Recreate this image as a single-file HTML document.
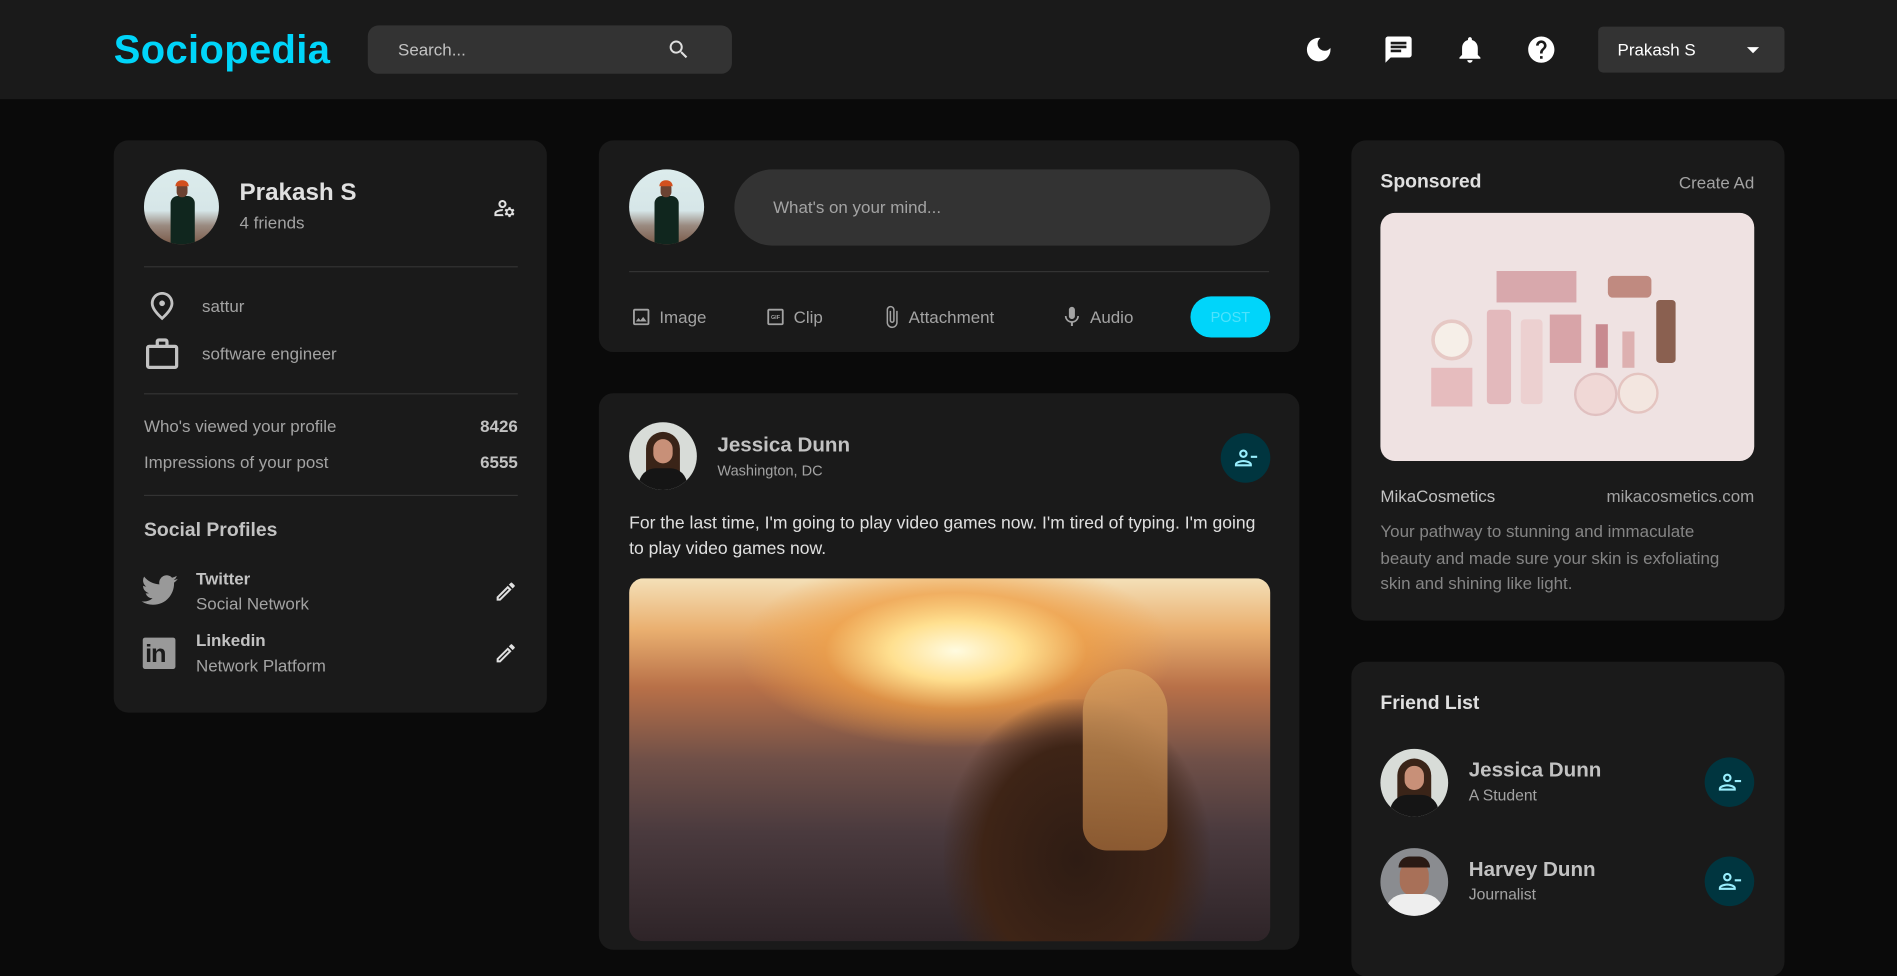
<!DOCTYPE html>
<html><head><meta charset="utf-8">
<style>
*{box-sizing:border-box;margin:0;padding:0}
html,body{width:1897px;height:928px;overflow:hidden;background:#0a0a0a;font-family:"Liberation Sans",sans-serif}
#w{position:absolute;left:0;top:0;width:1568px;height:767px;transform:scale(1.20982);transform-origin:0 0}
.a{position:absolute}
.card{position:absolute;background:#1a1a1a;border-radius:12px}
.t{position:absolute;white-space:nowrap;transform:translateY(-50%)}
.hr{position:absolute;height:1px;background:#333}
.av{position:absolute;border-radius:50%;overflow:hidden}
.btn{position:absolute;width:41px;height:41px;border-radius:50%;background:#00353f}
svg{position:absolute}
</style></head><body><div id="w">
<div class="a" style="left:0;top:0;width:1568px;height:82px;background:#1a1a1a"></div>
<div class="t" style="left:94px;top:41px;font-size:33px;font-weight:bold;color:#00d5fa;letter-spacing:0.3px">Sociopedia</div>
<div class="a" style="left:304px;top:21px;width:301px;height:40px;background:#333;border-radius:9px"></div>
<div class="t" style="left:329px;top:41px;font-size:14px;color:#c2c2c2">Search...</div>
<svg style="left:551px;top:31px" width="20" height="20" viewBox="0 0 24 24"><path fill="#e0e0e0" d="M15.5 14h-.79l-.28-.27A6.47 6.47 0 0 0 16 9.5 6.5 6.5 0 1 0 9.5 16c1.61 0 3.090-.59 4.23-1.57l.27.28v.79l5 4.99L20.49 19zm-6 0C7.01 14 5 11.99 5 9.5S7.01 5 9.5 5 14 7.01 14 9.5 11.99 14 9.5 14"/></svg>
<svg style="left:1077px;top:28px" width="26" height="26" viewBox="0 0 24 24"><path fill="#fff" d="M12 3a9 9 0 1 0 9 9c0-.46-.04-.92-.1-1.36a5.39 5.39 0 0 1-4.4 2.26 5.4 5.4 0 0 1-3.14-9.8c-.44-.06-.9-.1-1.36-.1"/></svg>
<svg style="left:1143px;top:28px" width="26" height="26" viewBox="0 0 24 24"><path fill="#fff" d="M20 2H4c-1.1 0-2 .9-2 2v18l4-4h14c1.1 0 2-.9 2-2V4c0-1.1-.9-2-2-2M6 9h12v2H6zm8 5H6v-2h8zm4-6H6V6h12z"/></svg>
<svg style="left:1202px;top:28px" width="26" height="26" viewBox="0 0 24 24"><path fill="#fff" d="M12 22c1.1 0 2-.9 2-2h-4c0 1.1.89 2 2 2m6-6v-5c0-3.070-1.64-5.640-4.5-6.32V4c0-.83-.67-1.5-1.5-1.5s-1.5.67-1.5 1.5v.68C7.63 5.36 6 7.92 6 11v5l-2 2v1h16v-1z"/></svg>
<svg style="left:1261px;top:28px" width="26" height="26" viewBox="0 0 24 24"><path fill="#fff" d="M12 2C6.48 2 2 6.48 2 12s4.48 10 10 10 10-4.48 10-10S17.52 2 12 2m1 17h-2v-2h2zm2.07-7.75-.9.92C13.45 12.9 13 13.5 13 15h-2v-.5c0-1.1.45-2.1 1.17-2.83l1.24-1.26c.37-.36.59-.86.59-1.41 0-1.1-.9-2-2-2s-2 .9-2 2H8c0-2.21 1.79-4 4-4s4 1.79 4 4c0 .88-.36 1.68-.93 2.25"/></svg>
<div class="a" style="left:1321px;top:22px;width:154px;height:38px;background:#333;border-radius:4px"></div>
<div class="t" style="left:1337px;top:41px;font-size:14px;color:#fff">Prakash S</div>
<div class="a" style="left:1444px;top:39px;border-left:5px solid transparent;border-right:5px solid transparent;border-top:5px solid #fff"></div>

<div class="card" style="left:94px;top:116px;width:358px;height:473px"></div>
<div class="av" style="left:119px;top:140px;width:62px;height:62px;background:linear-gradient(180deg,#dcecec 0%,#d6e6e8 55%,#9a8a80 75%,#7a5a48 100%)"><div class="a" style="left:22px;top:22px;width:20px;height:40px;background:#10261e;border-radius:6px 6px 0 0"></div><div class="a" style="left:27px;top:11px;width:9px;height:12px;background:#6b4232;border-radius:4px"></div><div class="a" style="left:26px;top:9px;width:11px;height:5px;background:#d2501f;border-radius:5px 5px 0 0"></div></div>
<div class="t" style="left:198px;top:160px;font-size:20px;font-weight:bold;color:#e0e0e0">Prakash S</div>
<div class="t" style="left:198px;top:184px;font-size:14px;color:#a3a3a3">4 friends</div>
<svg style="left:407px;top:162px" width="20" height="20" viewBox="0 0 24 24"><path fill="#e0e0e0" d="M4 18v-.65c0-.34.16-.66.41-.81C6.1 15.53 8.03 15 10 15c.03 0 .05 0 .08.01.1-.7.3-1.37.59-1.98-.22-.02-.44-.03-.67-.03-2.42 0-4.68.67-6.61 1.82-.88.52-1.39 1.5-1.39 2.53V20h9.26c-.42-.6-.75-1.28-.97-2zm6-6c2.21 0 4-1.79 4-4s-1.79-4-4-4-4 1.79-4 4 1.79 4 4 4m0-6c1.1 0 2 .9 2 2s-.9 2-2 2-2-.9-2-2 .9-2 2-2m10.75 10c0-.22-.03-.42-.06-.63l1.14-1.01-1-1.73-1.45.49c-.32-.27-.68-.48-1.08-.63L18 11h-2l-.3 1.49c-.4.15-.76.36-1.08.63l-1.45-.49-1 1.73 1.14 1.01c-.03.21-.06.41-.06.63s.03.42.06.63l-1.14 1.01 1 1.730 1.45-.49c.32.27.68.48 1.08.63L16 21h2l.3-1.49c.4-.15.76-.36 1.08-.63l1.45.49 1-1.73-1.14-1.01c.03-.21.06-.41.06-.63M17 18c-1.1 0-2-.9-2-2s.9-2 2-2 2 .9 2 2-.9 2-2 2"/></svg>
<div class="hr" style="left:119px;top:220px;width:309px"></div>
<svg style="left:120px;top:239px" width="28" height="28" viewBox="0 0 24 24"><path fill="#c2c2c2" d="M12 12c-1.1 0-2-.9-2-2s.9-2 2-2 2 .9 2 2-.9 2-2 2m6-1.8C18 6.57 15.35 4 12 4s-6 2.57-6 6.2c0 2.34 1.95 5.44 6 9.14 4.05-3.7 6-6.8 6-9.14M12 2c4.2 0 8 3.22 8 8.2 0 3.32-2.67 7.25-8 11.8-5.33-4.55-8-8.48-8-11.8C4 5.22 7.8 2 12 2"/></svg>
<div class="t" style="left:167px;top:253px;font-size:14px;color:#a3a3a3">sattur</div>
<svg style="left:118px;top:277px" width="32" height="32" viewBox="0 0 24 24"><path fill="#c2c2c2" d="M14 6V4h-4v2zM4 8v11h16V8zm16-2c1.11 0 2 .89 2 2v11c0 1.11-.89 2-2 2H4c-1.11 0-2-.89-2-2l.01-11c0-1.11.88-2 1.990-2h4V4c0-1.11.89-2 2-2h4c1.11 0 2 .89 2 2v2z"/></svg>
<div class="t" style="left:167px;top:292px;font-size:14px;color:#a3a3a3">software engineer</div>
<div class="hr" style="left:119px;top:325px;width:309px"></div>
<div class="t" style="left:119px;top:352px;font-size:14px;color:#a3a3a3">Who's viewed your profile</div>
<div class="t" style="right:1140px;top:352px;font-size:14px;font-weight:bold;color:#c2c2c2">8426</div>
<div class="t" style="left:119px;top:382px;font-size:14px;color:#a3a3a3">Impressions of your post</div>
<div class="t" style="right:1140px;top:382px;font-size:14px;font-weight:bold;color:#c2c2c2">6555</div>
<div class="hr" style="left:119px;top:409px;width:309px"></div>
<div class="t" style="left:119px;top:439px;font-size:16px;font-weight:bold;color:#c2c2c2">Social Profiles</div>
<svg style="left:117px;top:475px" width="30" height="26" viewBox="0 0 24 20"><path fill="#999" d="M24 2.4a9.8 9.8 0 0 1-2.8.8A4.9 4.9 0 0 0 23.3.4a9.9 9.9 0 0 1-3.1 1.2A4.9 4.9 0 0 0 11.8 6 14 14 0 0 1 1.7.9a4.9 4.9 0 0 0 1.5 6.6 4.9 4.9 0 0 1-2.2-.6v.1a4.9 4.9 0 0 0 3.9 4.8 4.9 4.9 0 0 1-2.2.1 4.9 4.9 0 0 0 4.6 3.4A9.9 9.9 0 0 1 0 17.3 14 14 0 0 0 7.5 19.5c9.1 0 14-7.5 14-14v-.6A10 10 0 0 0 24 2.4"/></svg>
<div class="t" style="left:162px;top:478px;font-size:14px;font-weight:bold;color:#c2c2c2">Twitter</div>
<div class="t" style="left:162px;top:499px;font-size:14px;color:#a3a3a3">Social Network</div>
<svg style="left:408px;top:479px" width="20" height="20" viewBox="0 0 24 24"><path fill="#e0e0e0" d="M3 17.25V21h3.75L17.81 9.94l-3.75-3.75zM5.92 19H5v-.92l9.06-9.06.92.92zM20.71 5.63l-2.34-2.34a1 1 0 0 0-1.41 0l-1.83 1.83 3.75 3.75 1.83-1.83a1 1 0 0 0 0-1.41"/></svg>
<div class="a" style="left:118px;top:527px;width:27px;height:26px;background:#999;border-radius:2px"></div>
<div class="a" style="left:120px;top:528px;font-size:21px;font-weight:bold;color:#1a1a1a;line-height:26px;letter-spacing:-1px">in</div>
<div class="t" style="left:162px;top:529px;font-size:14px;font-weight:bold;color:#c2c2c2">Linkedin</div>
<div class="t" style="left:162px;top:550px;font-size:14px;color:#a3a3a3">Network Platform</div>
<svg style="left:408px;top:530px" width="20" height="20" viewBox="0 0 24 24"><path fill="#e0e0e0" d="M3 17.25V21h3.75L17.81 9.94l-3.75-3.75zM5.92 19H5v-.92l9.06-9.06.92.92zM20.71 5.63l-2.34-2.34a1 1 0 0 0-1.41 0l-1.83 1.83 3.75 3.75 1.83-1.83a1 1 0 0 0 0-1.41"/></svg>

<div class="card" style="left:495px;top:116px;width:579px;height:175px"></div>
<div class="av" style="left:520px;top:140px;width:62px;height:62px;background:linear-gradient(180deg,#dcecec 0%,#d6e6e8 55%,#9a8a80 75%,#7a5a48 100%)"><div class="a" style="left:21px;top:22px;width:20px;height:40px;background:#10261e;border-radius:6px 6px 0 0"></div><div class="a" style="left:26px;top:11px;width:9px;height:12px;background:#6b4232;border-radius:4px"></div><div class="a" style="left:25px;top:9px;width:11px;height:5px;background:#d2501f;border-radius:5px 5px 0 0"></div></div>
<div class="a" style="left:607px;top:140px;width:443px;height:63px;background:#333;border-radius:32px"></div>
<div class="t" style="left:639px;top:171px;font-size:14px;color:#a3a3a3">What's on your mind...</div>
<div class="hr" style="left:520px;top:224px;width:529px"></div>
<svg style="left:521px;top:253px" width="18" height="18" viewBox="0 0 24 24"><path fill="#a3a3a3" d="M19 5v14H5V5zm0-2H5c-1.1 0-2 .9-2 2v14c0 1.1.9 2 2 2h14c1.1 0 2-.9 2-2V5c0-1.1-.9-2-2-2m-4.86 8.86-3 3.87L9 13.14 6 17h12z"/></svg>
<div class="t" style="left:545px;top:262px;font-size:14px;color:#a3a3a3">Image</div>
<svg style="left:632px;top:253px" width="18" height="18" viewBox="0 0 24 24"><path fill="#a3a3a3" d="M19 3H5c-1.1 0-2 .9-2 2v14c0 1.1.9 2 2 2h14c1.1 0 2-.9 2-2V5c0-1.1-.9-2-2-2m0 16H5V5h14z"/><text x="12" y="14.5" font-size="6" fill="#a3a3a3" text-anchor="middle" font-family="Liberation Sans" font-weight="bold">GIF</text></svg>
<div class="t" style="left:656px;top:262px;font-size:14px;color:#a3a3a3">Clip</div>
<svg style="left:727px;top:251px" width="20" height="22" viewBox="0 0 24 24"><path fill="#a3a3a3" d="M16.5 6v11.5c0 2.21-1.79 4-4 4s-4-1.79-4-4V5a2.5 2.5 0 0 1 5 0v10.5c0 .55-.45 1-1 1s-1-.45-1-1V6H10v9.5a2.5 2.5 0 0 0 5 0V5c0-2.21-1.79-4-4-4S7 2.79 7 5v12.5c0 3.04 2.46 5.5 5.5 5.5s5.5-2.46 5.5-5.5V6z"/></svg>
<div class="t" style="left:751px;top:262px;font-size:14px;color:#a3a3a3">Attachment</div>
<svg style="left:876px;top:252px" width="20" height="20" viewBox="0 0 24 24"><path fill="#a3a3a3" d="M12 14c1.66 0 2.99-1.34 2.99-3L15 5c0-1.66-1.34-3-3-3S9 3.34 9 5v6c0 1.66 1.34 3 3 3m5.3-3c0 3-2.54 5.1-5.3 5.1S6.7 14 6.7 11H5c0 3.41 2.72 6.23 6 6.72V21h2v-3.28c3.28-.48 6-3.3 6-6.72z"/></svg>
<div class="t" style="left:901px;top:262px;font-size:14px;color:#a3a3a3">Audio</div>
<div class="a" style="left:984px;top:245px;width:66px;height:34px;background:#00d5fa;border-radius:17px;color:#4de2fc;font-size:12px;text-align:center;line-height:34px">POST</div>

<div class="card" style="left:495px;top:325px;width:579px;height:460px"></div>
<div class="av" style="left:520px;top:349px;width:56px;height:56px;background:#d8dcd8"><div class="a" style="left:14px;top:8px;width:28px;height:44px;background:#3a2418;border-radius:14px 14px 6px 6px"></div><div class="a" style="left:20px;top:14px;width:16px;height:20px;background:#c89078;border-radius:8px"></div><div class="a" style="left:8px;top:38px;width:40px;height:20px;background:#151515;border-radius:14px 14px 0 0"></div></div>
<div class="t" style="left:593px;top:368px;font-size:17px;font-weight:bold;color:#c2c2c2">Jessica Dunn</div>
<div class="t" style="left:593px;top:389px;font-size:12px;color:#a3a3a3">Washington, DC</div>
<div class="btn" style="left:1009px;top:358px"></div>
<svg style="left:1019px;top:368px" width="21" height="21" viewBox="0 0 24 24"><path fill="#99eefd" d="M14 8c0-2.21-1.79-4-4-4S6 5.79 6 8s1.79 4 4 4 4-1.79 4-4m-2 0c0 1.1-.9 2-2 2s-2-.9-2-2 .9-2 2-2 2 .9 2 2M2 18v2h16v-2c0-2.66-5.33-4-8-4s-8 1.34-8 4m2 0c.2-.71 3.3-2 6-2 2.69 0 5.77 1.28 6 2zm13-8h6v2h-6z"/></svg>
<div class="a" style="left:520px;top:423px;width:530px;font-size:14.5px;line-height:21px;color:#e0e0e0">For the last time, I'm going to play video games now. I'm tired of typing. I'm going to play video games now.</div>
<div class="a" style="left:520px;top:478px;width:530px;height:300px;border-radius:12px;overflow:hidden;background:radial-gradient(ellipse 180px 80px at 270px 60px,#fffbe0 0%,#ffe090 30%,rgba(240,160,70,0.7) 60%,rgba(0,0,0,0) 100%),linear-gradient(180deg,#f4e0b8 0%,#eab070 14%,#b87048 30%,#705048 50%,#4a3a3e 70%,#2e2428 100%)">
<div class="a" style="left:260px;top:100px;width:220px;height:220px;background:radial-gradient(ellipse at 50% 60%,#2e1c14 0%,#3e2416 50%,rgba(0,0,0,0) 72%)"></div>
<div class="a" style="left:375px;top:75px;width:70px;height:150px;background:linear-gradient(180deg,#d8a060,#a06838);border-radius:35px 35px 20px 20px;opacity:.8"></div>
</div>

<div class="card" style="left:1117px;top:116px;width:358px;height:397px"></div>
<div class="t" style="left:1141px;top:151px;font-size:16px;font-weight:bold;color:#e0e0e0">Sponsored</div>
<div class="t" style="right:118px;top:151px;font-size:14px;color:#a3a3a3">Create Ad</div>
<div class="a" style="left:1141px;top:176px;width:309px;height:205px;border-radius:12px;overflow:hidden;background:#efe2e2">
<div class="a" style="left:96px;top:48px;width:66px;height:26px;background:#d8a8ac"></div>
<div class="a" style="left:188px;top:52px;width:36px;height:18px;background:#c08a80;border-radius:4px"></div>
<div class="a" style="left:42px;top:88px;width:34px;height:34px;background:#f6efe8;border-radius:50%;border:3px solid #e6c8c4"></div>
<div class="a" style="left:88px;top:80px;width:20px;height:78px;background:#e3b9bc;border-radius:3px"></div>
<div class="a" style="left:116px;top:88px;width:18px;height:70px;background:#ecd0d0;border-radius:3px"></div>
<div class="a" style="left:140px;top:84px;width:26px;height:40px;background:#d8a4a8"></div>
<div class="a" style="left:42px;top:128px;width:34px;height:32px;background:#e6bcbe"></div>
<div class="a" style="left:178px;top:92px;width:10px;height:36px;background:#c88a90"></div>
<div class="a" style="left:200px;top:98px;width:10px;height:30px;background:#ddb0b0"></div>
<div class="a" style="left:228px;top:72px;width:16px;height:52px;background:#8a6050;border-radius:3px"></div>
<div class="a" style="left:160px;top:132px;width:36px;height:36px;background:#f0d8d6;border-radius:50%;border:2px solid #e0c0c0"></div>
<div class="a" style="left:196px;top:132px;width:34px;height:34px;background:#f3e6e0;border-radius:50%;border:2px solid #e4c4c0"></div>
</div>
<div class="t" style="left:1141px;top:410px;font-size:14px;color:#c2c2c2">MikaCosmetics</div>
<div class="t" style="right:118px;top:410px;font-size:14px;color:#a3a3a3">mikacosmetics.com</div>
<div class="a" style="left:1141px;top:429px;width:300px;font-size:14px;line-height:21.5px;color:#858585">Your pathway to stunning and immaculate beauty and made sure your skin is exfoliating skin and shining like light.</div>

<div class="card" style="left:1117px;top:547px;width:358px;height:260px"></div>
<div class="t" style="left:1141px;top:582px;font-size:16px;font-weight:bold;color:#e0e0e0">Friend List</div>
<div class="av" style="left:1141px;top:619px;width:56px;height:56px;background:#d8dcd8"><div class="a" style="left:14px;top:8px;width:28px;height:44px;background:#3a2418;border-radius:14px 14px 6px 6px"></div><div class="a" style="left:20px;top:14px;width:16px;height:20px;background:#c89078;border-radius:8px"></div><div class="a" style="left:8px;top:38px;width:40px;height:20px;background:#151515;border-radius:14px 14px 0 0"></div></div>
<div class="t" style="left:1214px;top:637px;font-size:17px;font-weight:bold;color:#c2c2c2">Jessica Dunn</div>
<div class="t" style="left:1214px;top:657px;font-size:13px;color:#a3a3a3">A Student</div>
<div class="btn" style="left:1409px;top:626px"></div>
<svg style="left:1419px;top:636px" width="21" height="21" viewBox="0 0 24 24"><path fill="#99eefd" d="M14 8c0-2.21-1.79-4-4-4S6 5.79 6 8s1.79 4 4 4 4-1.79 4-4m-2 0c0 1.1-.9 2-2 2s-2-.9-2-2 .9-2 2-2 2 .9 2 2M2 18v2h16v-2c0-2.66-5.33-4-8-4s-8 1.34-8 4m2 0c.2-.71 3.3-2 6-2 2.69 0 5.77 1.28 6 2zm13-8h6v2h-6z"/></svg>
<div class="av" style="left:1141px;top:701px;width:56px;height:56px;background:#8a8c90"><div class="a" style="left:16px;top:10px;width:24px;height:30px;background:#a87058;border-radius:12px"></div><div class="a" style="left:15px;top:7px;width:26px;height:9px;background:#2a1a14;border-radius:12px 12px 0 0"></div><div class="a" style="left:4px;top:38px;width:48px;height:20px;background:#eee;border-radius:16px 16px 0 0"></div></div>
<div class="t" style="left:1214px;top:719px;font-size:17px;font-weight:bold;color:#c2c2c2">Harvey Dunn</div>
<div class="t" style="left:1214px;top:739px;font-size:13px;color:#a3a3a3">Journalist</div>
<div class="btn" style="left:1409px;top:708px"></div>
<svg style="left:1419px;top:718px" width="21" height="21" viewBox="0 0 24 24"><path fill="#99eefd" d="M14 8c0-2.21-1.79-4-4-4S6 5.79 6 8s1.79 4 4 4 4-1.79 4-4m-2 0c0 1.1-.9 2-2 2s-2-.9-2-2 .9-2 2-2 2 .9 2 2M2 18v2h16v-2c0-2.66-5.33-4-8-4s-8 1.34-8 4m2 0c.2-.71 3.3-2 6-2 2.69 0 5.77 1.28 6 2zm13-8h6v2h-6z"/></svg>
</div></body></html>
